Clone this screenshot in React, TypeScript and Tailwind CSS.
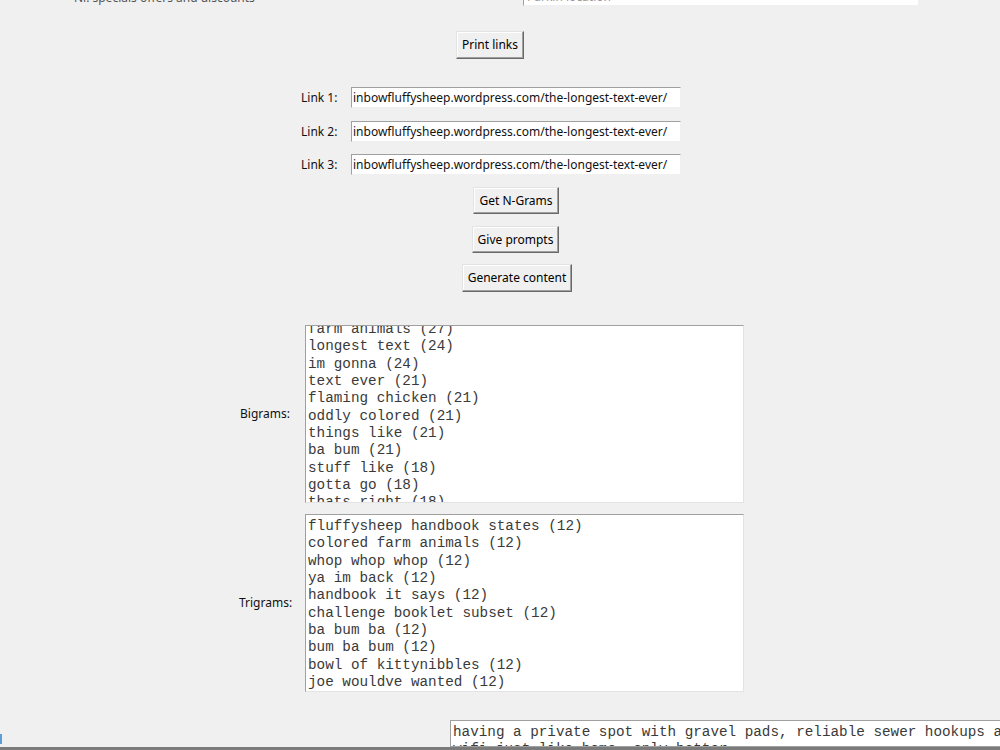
import React from "react";

const ui = { fontFamily: '"Noto Sans", "Open Sans", sans-serif' };
const mono = { fontFamily: '"Liberation Mono", "Courier New", monospace' };

function TkButton({ label, ml, w, h }: { label: string; ml: string; w: string; h: string }) {
  return (
    <div className={`flex ${ml}`}>
      <div
        className={`${w} ${h} flex items-center justify-center border border-[#e3e3e3] border-b-[#696969] border-r-[#696969] bg-[#f0f0f0] text-[12px] text-[#000] shadow-[inset_-1px_-1px_0_#a0a0a0,inset_1px_1px_0_#ffffff]`}
        style={ui}
      >
        {label}
      </div>
    </div>
  );
}

const LINK = "inbowfluffysheep.wordpress.com/the-longest-text-ever/";

function LinkRow({ n, mt }: { n: number; mt: string }) {
  return (
    <div className={`flex items-center h-[21px] shrink-0 ${mt}`}>
      <div className="ml-[301px] w-[50px] text-[12px] text-[#111]" style={ui}>
        Link {n}:
      </div>
      <div
        className="w-[330px] h-[21px] bg-white border border-[#a0a0a0] border-b-[#f0f0f0] border-r-[#f0f0f0] flex items-center pl-[1px] text-[12px] text-[#111] overflow-hidden whitespace-nowrap"
        style={ui}
      >
        {LINK}
      </div>
    </div>
  );
}

const bigrams = [
  "farm animals (27)",
  "longest text (24)",
  "im gonna (24)",
  "text ever (21)",
  "flaming chicken (21)",
  "oddly colored (21)",
  "things like (21)",
  "ba bum (21)",
  "stuff like (18)",
  "gotta go (18)",
  "thats right (18)",
];

const trigrams = [
  "fluffysheep handbook states (12)",
  "colored farm animals (12)",
  "whop whop whop (12)",
  "ya im back (12)",
  "handbook it says (12)",
  "challenge booklet subset (12)",
  "ba bum ba (12)",
  "bum ba bum (12)",
  "bowl of kittynibbles (12)",
  "joe wouldve wanted (12)",
];

function TextBox({ label, lines, mt, offset, labelMl }: { label: string; lines: string[]; mt: string; offset: string; labelMl: string }) {
  return (
    <div className={`flex items-center shrink-0 ${mt}`}>
      <div className={`${labelMl} text-[12px] text-[#111]`} style={ui}>
        {label}
      </div>
      <div className="w-[439px] h-[178px] bg-white border border-[#a0a0a0] border-b-[#e3e3e3] border-r-[#e3e3e3] overflow-hidden">
        <div className={`${offset} pl-[2px] text-[14.3px] leading-[17.33px] text-[#3a3a3a]`} style={mono}>
          {lines.map((l) => (
            <div key={l} className="whitespace-pre">
              {l}
            </div>
          ))}
        </div>
      </div>
    </div>
  );
}

export default function App() {
  return (
    <div className="w-[1000px] h-[750px] bg-[#f0f0f0] overflow-hidden flex flex-col">
      {/* cut-off top row */}
      <div className="flex items-center h-[21px] mt-[-15px] shrink-0">
        <div className="ml-[74px] mt-[4px] w-[449px] text-[12px] text-[#555] whitespace-nowrap" style={ui}>
          Nr. specials offers and discounts
        </div>
        <div
          className="w-[396px] h-[21px] bg-white border border-[#a0a0a0] border-b-[#f0f0f0] border-r-[#f0f0f0] flex items-end pl-[3px] text-[12px] leading-[16px] text-[#999] whitespace-nowrap"
          style={ui}
        >
          Parkin location
        </div>
      </div>

      <div className="mt-[25px] shrink-0">
        <TkButton label="Print links" ml="ml-[456px]" w="w-[68px]" h="h-[28px]" />
      </div>

      <LinkRow n={1} mt="mt-[28px]" />
      <LinkRow n={2} mt="mt-[13px]" />
      <LinkRow n={3} mt="mt-[12px]" />

      <div className="mt-[12px] shrink-0">
        <TkButton label="Get N-Grams" ml="ml-[473px]" w="w-[86px]" h="h-[27px]" />
      </div>
      <div className="mt-[12px] shrink-0">
        <TkButton label="Give prompts" ml="ml-[472px]" w="w-[87px]" h="h-[27px]" />
      </div>
      <div className="mt-[11px] shrink-0">
        <TkButton label="Generate content" ml="ml-[462px]" w="w-[110px]" h="h-[28px]" />
      </div>

      <TextBox label="Bigrams:" lines={bigrams} mt="mt-[33px]" offset="mt-[-5px]" labelMl="ml-[240px] w-[65px]" />
      <TextBox label="Trigrams:" lines={trigrams} mt="mt-[11px]" offset="mt-[3px]" labelMl="ml-[239px] w-[66px]" />

      <div className="flex items-start mt-[28px] h-[27px] shrink-0">
        <div className="mt-[14px] w-[2px] h-[10px] bg-[#5a9fd8]" />
        <div className="ml-[448px] flex-1 h-[27px] bg-white border border-[#a0a0a0] border-r-0 overflow-hidden">
          <div className="pl-[2px] pt-[3px] text-[14.3px] leading-[17.33px] text-[#3a3a3a] whitespace-pre" style={mono}>
            <div>having a private spot with gravel pads, reliable sewer hookups and</div>
            <div>wifi just like home, only better.</div>
          </div>
        </div>
      </div>
      <div className="h-[3px] bg-[#7b7b7b] shrink-0" />
    </div>
  );
}
